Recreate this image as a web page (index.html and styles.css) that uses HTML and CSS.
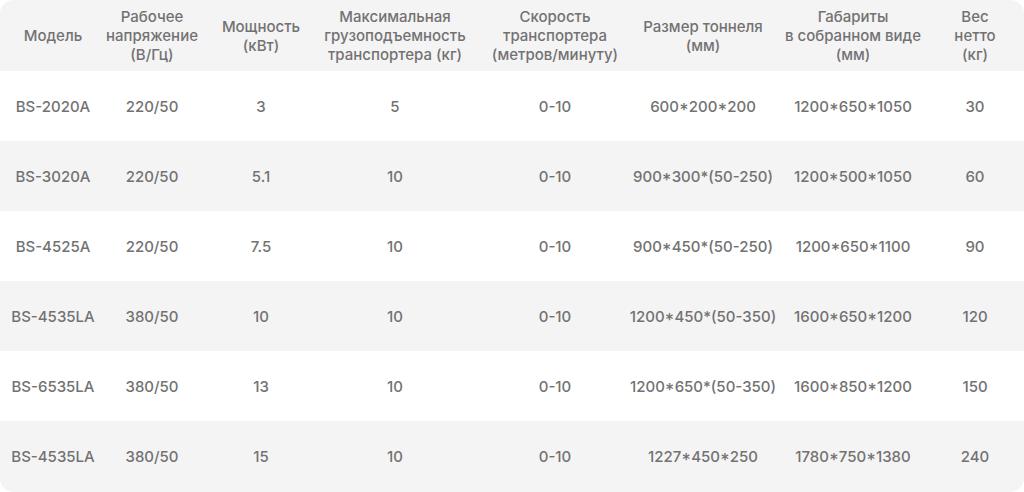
FILE: index.html
```html
<!DOCTYPE html>
<html lang="ru">
<head>
<meta charset="utf-8">
<link rel="stylesheet" href="styles.css">
</head>
<body>
<div class="table">
  <div class="row head">
    <div class="cell">Модель</div>
    <div class="cell">Рабочее<br>напряжение<br>(В/Гц)</div>
    <div class="cell">Мощность<br>(кВт)</div>
    <div class="cell">Максимальная<br>грузоподъемность<br>транспортера (кг)</div>
    <div class="cell">Скорость<br>транспортера<br>(метров/минуту)</div>
    <div class="cell">Размер тоннеля<br>(мм)</div>
    <div class="cell">Габариты<br>в собранном виде<br>(мм)</div>
    <div class="cell">Вес<br>нетто<br>(кг)</div>
  </div>
  <div class="row">
    <div class="cell">BS-2020A</div><div class="cell">220/50</div><div class="cell">3</div><div class="cell">5</div><div class="cell">0-10</div><div class="cell">600*200*200</div><div class="cell">1200*650*1050</div><div class="cell">30</div>
  </div>
  <div class="row alt">
    <div class="cell">BS-3020A</div><div class="cell">220/50</div><div class="cell">5.1</div><div class="cell">10</div><div class="cell">0-10</div><div class="cell">900*300*(50-250)</div><div class="cell">1200*500*1050</div><div class="cell">60</div>
  </div>
  <div class="row">
    <div class="cell">BS-4525A</div><div class="cell">220/50</div><div class="cell">7.5</div><div class="cell">10</div><div class="cell">0-10</div><div class="cell">900*450*(50-250)</div><div class="cell">1200*650*1100</div><div class="cell">90</div>
  </div>
  <div class="row alt">
    <div class="cell">BS-4535LA</div><div class="cell">380/50</div><div class="cell">10</div><div class="cell">10</div><div class="cell">0-10</div><div class="cell">1200*450*(50-350)</div><div class="cell">1600*650*1200</div><div class="cell">120</div>
  </div>
  <div class="row">
    <div class="cell">BS-6535LA</div><div class="cell">380/50</div><div class="cell">13</div><div class="cell">10</div><div class="cell">0-10</div><div class="cell">1200*650*(50-350)</div><div class="cell">1600*850*1200</div><div class="cell">150</div>
  </div>
  <div class="row alt last">
    <div class="cell">BS-4535LA</div><div class="cell">380/50</div><div class="cell">15</div><div class="cell">10</div><div class="cell">0-10</div><div class="cell">1227*450*250</div><div class="cell">1780*750*1380</div><div class="cell">240</div>
  </div>
</div>
</body>
</html>
```
FILE: styles.css
```css
html, body {
  margin: 0;
  padding: 0;
  background: #ffffff;
}
.table {
  width: 1024px;
  height: 492px;
  border-radius: 14px;
  overflow: hidden;
  font-family: "Inter", "Noto Sans", sans-serif;
  font-size: 15px;
  font-weight: 500;
  color: #727272;
  display: flex;
  flex-direction: column;
}
.row {
  display: grid;
  grid-template-columns: 106px 92px 126px 142px 178px 118px 182px 62px;
  height: 70px;
  align-items: center;
  background: #ffffff;
}
.row.head {
  height: 71px;
  line-height: 19px;
  background: #f5f4f5;
}
.row.alt {
  background: #f5f4f5;
}
.row.last {
  height: 71px;
}
.cell {
  text-align: center;
  white-space: nowrap;
  display: flex;
  flex-direction: column;
  align-items: center;
}
```
